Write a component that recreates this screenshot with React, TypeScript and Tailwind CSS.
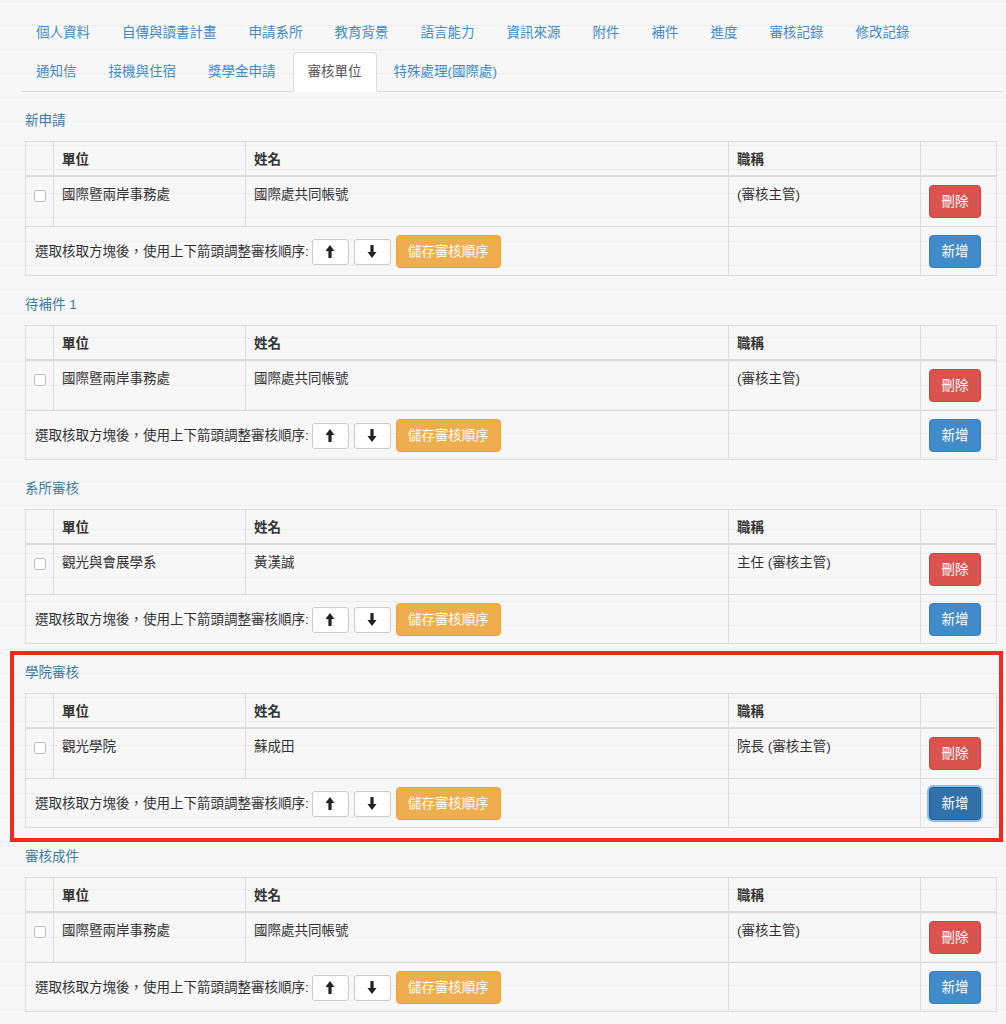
import React from 'react'

const row1 = ['個人資料', '自傳與讀書計畫', '申請系所', '教育背景', '語言能力', '資訊來源', '附件', '補件', '進度', '審核記錄', '修改記錄']
const row2 = ['通知信', '接機與住宿', '獎學金申請', '審核單位', '特殊處理(國際處)']

interface Section {
  title: string
  unit: string
  name: string
  job: string
  highlight?: boolean
}

const sections: Section[] = [
  { title: '新申請', unit: '國際暨兩岸事務處', name: '國際處共同帳號', job: '(審核主管)' },
  { title: '待補件 1', unit: '國際暨兩岸事務處', name: '國際處共同帳號', job: '(審核主管)' },
  { title: '系所審核', unit: '觀光與會展學系', name: '黃漢誠', job: '主任 (審核主管)' },
  { title: '學院審核', unit: '觀光學院', name: '蘇成田', job: '院長 (審核主管)', highlight: true },
  { title: '審核成件', unit: '國際暨兩岸事務處', name: '國際處共同帳號', job: '(審核主管)' },
]

function Tab({ label, active }: { label: string; active?: boolean }) {
  return (
    <li className="mr-[2px] -mb-px">
      <a
        className={
          active
            ? 'block px-[14px] py-[9px] leading-[20px] border border-[#ddd] border-b-transparent rounded-t-[4px] bg-white text-[#555]'
            : 'block px-[14px] py-[9px] leading-[20px] border border-transparent rounded-t-[4px] text-[#428bca]'
        }
      >
        {label}
      </a>
    </li>
  )
}

function Arrow({ down }: { down?: boolean }) {
  return (
    <svg width="10" height="13" viewBox="0 0 10 13" className={down ? 'rotate-180' : ''}>
      <polygon points="5,0 9.5,6 6.6,6 6.6,13 3.4,13 3.4,6 0.5,6" fill="#222" />
    </svg>
  )
}

function ReviewTable({ s }: { s: Section }) {
  const cell = 'border border-[#ddd] px-[8px] align-top'
  const head = 'border border-[#ddd] border-b-2 px-[8px] pt-[8px] pb-[6px] text-left font-bold'
  return (
    <table className="w-full table-fixed border-collapse border border-[#ddd]">
      <colgroup>
        <col className="w-[28px]" />
        <col className="w-[192px]" />
        <col className="w-[483px]" />
        <col className="w-[192px]" />
        <col />
      </colgroup>
      <thead>
        <tr>
          <th className={head} />
          <th className={head}>單位</th>
          <th className={head}>姓名</th>
          <th className={head}>職稱</th>
          <th className={head} />
        </tr>
      </thead>
      <tbody>
        <tr>
          <td className={cell + ' pt-[13px]'}>
            <span className="block w-[12px] h-[12px] rounded-[3px] border border-[#bbb] bg-white" />
          </td>
          <td className={cell + ' pt-[8px] pb-[8px]'}>{s.unit}</td>
          <td className={cell + ' pt-[8px] pb-[8px]'}>{s.name}</td>
          <td className={cell + ' pt-[8px] pb-[8px]'}>{s.job}</td>
          <td className={cell + ' pt-[8px] pb-[8px]'}>
            <button className="block w-[52px] h-[33px] rounded-[4px] border border-[#d43f3a] bg-[#d9534f] text-white">刪除</button>
          </td>
        </tr>
        <tr>
          <td colSpan={3} className="border border-[#ddd] pl-[9px] pt-[8px] pb-[7px] align-middle">
            <div className="flex items-center">
              <span>選取核取方塊後，使用上下箭頭調整審核順序:</span>
              <button className="ml-[3px] w-[37px] h-[26px] flex items-center justify-center rounded-[3px] border border-[#ccc] bg-white">
                <Arrow />
              </button>
              <button className="ml-[5px] w-[37px] h-[26px] flex items-center justify-center rounded-[3px] border border-[#ccc] bg-white">
                <Arrow down />
              </button>
              <button className="ml-[5px] w-[105px] h-[33px] rounded-[4px] border border-[#eea236] bg-[#f0ad4e] text-white">
                儲存審核順序
              </button>
            </div>
          </td>
          <td className="border border-[#ddd]" />
          <td className={cell + ' pt-[8px] pb-[7px]'}>
            {s.highlight ? (
              <button className="block w-[52px] h-[33px] rounded-[4px] border border-[#285e8e] bg-[#3071a9] text-white shadow-[0_0_0_2px_rgba(102,175,233,0.75)]">
                新增
              </button>
            ) : (
              <button className="block w-[52px] h-[33px] rounded-[4px] border border-[#357ebd] bg-[#428bca] text-white">新增</button>
            )}
          </td>
        </tr>
      </tbody>
    </table>
  )
}

export default function App() {
  return (
    <div className="min-h-screen w-full bg-[#f7f7f7] bg-[image:repeating-linear-gradient(to_bottom,transparent_0px,transparent_1px,#eeeeee_1px,#eeeeee_2px,transparent_2px,transparent_24px)] pl-[21px] pr-[4px] pt-[13px] pb-[10px] text-[13.5px] leading-[19px] text-[#333] font-['Liberation_Sans','Noto_Sans_CJK_TC',sans-serif]">
      <ul className="flex flex-wrap border-b border-[#ddd]">
        {row1.map((t) => (
          <Tab key={t} label={t} />
        ))}
        <li className="basis-full h-0" />
        {row2.map((t) => (
          <Tab key={t} label={t} active={t === '審核單位'} />
        ))}
      </ul>

      <div className="ml-[4px] mr-[5px] pt-[19px]">
        {sections.map((s) => (
          <div key={s.title} className="mb-[19px]">
            <div className="relative">
              {s.highlight && (
                <div className="absolute -top-[12px] -left-[15px] -right-[6px] -bottom-[14px] border-[4px] border-[#f2291c] pointer-events-none" />
              )}
              <div className="h-[20px] leading-[20px] mb-[10px] text-[#3b7ca3]">{s.title}</div>
              <ReviewTable s={s} />
            </div>
          </div>
        ))}
      </div>
    </div>
  )
}
